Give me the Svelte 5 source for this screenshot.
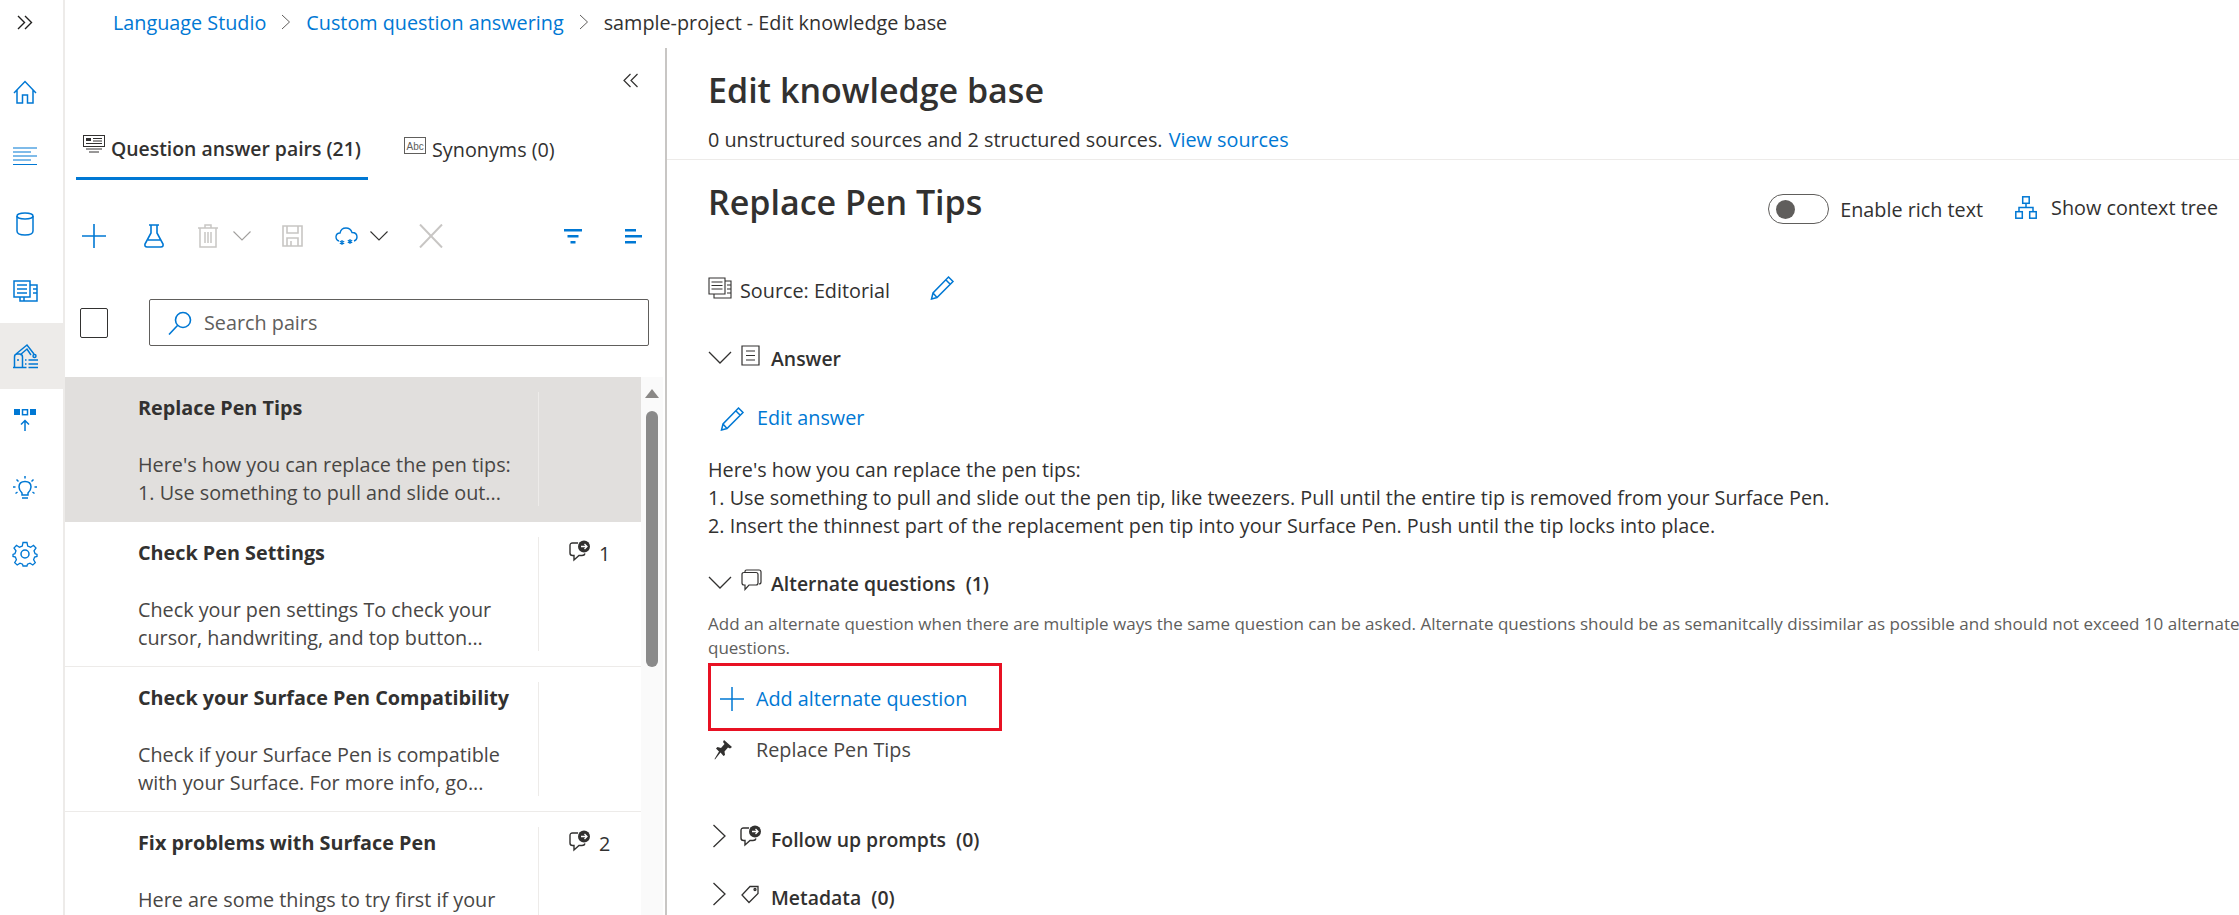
<script>
	const navIcons = ['home', 'lines', 'db', 'table', 'robot', 'deploy', 'bulb', 'gear'];
	const pairs = [
		{ title: 'Replace Pen Tips', body: ["Here's how you can replace the pen tips:", '1. Use something to pull and slide out...'], count: 0, selected: true },
		{ title: 'Check Pen Settings', body: ['Check your pen settings To check your', 'cursor, handwriting, and top button...'], count: 1 },
		{ title: 'Check your Surface Pen Compatibility', body: ['Check if your Surface Pen is compatible', 'with your Surface. For more info, go...'], count: 0 },
		{ title: 'Fix problems with Surface Pen', body: ['Here are some things to try first if your'], count: 2 }
	];
</script>

{#snippet followIcon()}
	<svg class="follow" width="22" height="22" viewBox="0 0 22 22" fill="none" stroke="currentColor" stroke-width="1.4">
		<path d="M9 3H3.5Q1 3 1 5.500V13Q1 15.500 3.500 15.500H5V20L10 15.500H13Q15.500 15.500 16 13.500" />
		<circle cx="15" cy="6.500" r="6" fill="currentColor" stroke="none" />
		<path d="M12 6.500H18M15.500 4L18 6.500L15.500 9" stroke="#fff" stroke-width="1.3" />
	</svg>
{/snippet}

{#snippet chevronDown(cls)}
	<svg class={cls} width="24" height="13" viewBox="0 0 24 13" fill="none" stroke="currentColor" stroke-width="1.3"><path d="M1 1L12 12L23 1" /></svg>
{/snippet}

{#snippet chevronRight()}
	<svg class="chev-r" width="14" height="24" viewBox="0 0 14 24" fill="none" stroke="currentColor" stroke-width="1.3"><path d="M1.500 1L13 12L1.500 23" /></svg>
{/snippet}

{#snippet pencil()}
	<svg width="25" height="25" viewBox="0 0 25 25" fill="none" stroke="#0078d4" stroke-width="1.500">
		<path d="M18.500 2L23 6.500L7 22.500L1.500 24L3 18ZM16 5L20.500 9.500M3 18L7 22.500" />
	</svg>
{/snippet}

<div class="app">
	<nav class="nav">
		<div class="expand">
			<svg width="16" height="15" viewBox="0 0 16 15" fill="none" stroke="#201f1e" stroke-width="1.400"><path d="M1 1L7.500 7.500L1 14M8 1L14.500 7.500L8 14" /></svg>
		</div>
		{#each navIcons as icon}
			<div class="nav-item" class:active={icon === 'robot'}>
				<svg width="26" height="26" viewBox="0 0 26 26" fill="none" stroke="#0078d4" stroke-width="1.500">
					{#if icon === 'home'}
						<path d="M2 14L13 2.500L24 14M5 11V24H10.500V16H15.500V24H21V11" />
					{:else if icon === 'lines'}
						<path stroke-width="1.200" d="M1 3H25M1 7H19M1 11H25M1 15H19M1 19.500H25" />
					{:else if icon === 'db'}
						<ellipse cx="13" cy="5" rx="8" ry="3" />
						<path d="M5 5V20Q5 24 13 24Q21 24 21 20V5" />
					{:else if icon === 'table'}
						<path d="M2 4H18V20H2ZM5 8H15M5 12H15M5 16H15" />
						<path d="M18 8H25V24H8V20M21 12H25M21 16H25M12 20V24" />
					{:else if icon === 'robot'}
						<path d="M1 24.500H13M2.500 24.500V14Q2.500 11 5 11H7.500Q10.500 11 10.500 14V24.500M4 11L15 2L22 11M8 12L15 6L19 12" />
						<circle cx="22.500" cy="13" r="1.500" />
						<circle cx="6" cy="17" r="1" fill="#0078d4" stroke="none" />
						<path d="M13 17H14.500M16.500 17H26M13 21H14.500M16.500 21H26M13 24.500H14.500M16.500 24.500H26" />
					{:else if icon === 'deploy'}
						<rect x="2" y="0" width="6" height="6" fill="#0078d4" stroke="none" />
						<rect x="10.500" y="0.700" width="5" height="5" />
						<rect x="18" y="0" width="6" height="6" fill="#0078d4" stroke="none" />
						<path d="M13 22V12M9 15.500L13 11.500L17 15.500" />
					{:else if icon === 'bulb'}
						<path d="M10 20V18Q7 15 7 12Q7 6.500 13 6.500Q19 6.500 19 12Q19 15 16 18V20ZM10 23H16" />
						<path d="M13 1V3.500M4.500 4.500L6.500 6.500M21.500 4.500L19.500 6.500M1 12H3.500M22.500 12H25M3.500 18.500L5.500 17M22.500 18.500L20.500 17" />
					{:else}
						<circle cx="13" cy="13" r="4" />
						<path d="M11 1.500H15L15.700 5L18.600 6.200L21.500 4.300L24 7L22 9.800L23.100 12.700L25 13.500V15.500L22.600 16L21.600 18.800L23.300 21.700L20.800 24L18 22.200L15.500 23.200L15 25H11L10.500 23.200L8 22.200L5.200 24L2.700 21.700L4.400 18.800L3.400 16L1 15.500V13.500L2.900 12.700L4 9.800L2 7L4.500 4.300L7.400 6.200L10.300 5Z" stroke-width="1.300" />
					{/if}
				</svg>
			</div>
		{/each}
	</nav>

	<div class="main">
		<header class="crumbs">
			<a href="#top">Language Studio</a>
			<svg width="10" height="16" viewBox="0 0 10 16" fill="none" stroke="#605e5c" stroke-width="1"><path d="M1 1L8.500 8L1 15" /></svg>
			<a href="#top">Custom question answering</a>
			<svg width="10" height="16" viewBox="0 0 10 16" fill="none" stroke="#605e5c" stroke-width="1"><path d="M1 1L8.500 8L1 15" /></svg>
			<span>sample-project - Edit knowledge base</span>
		</header>

		<div class="content">
			<aside class="left">
				<div class="collapse">
					<svg width="16" height="15" viewBox="0 0 16 15" fill="none" stroke="#323130" stroke-width="1.200"><path d="M7.500 1L1 7.500L7.500 14M14.500 1L8 7.500L14.500 14" /></svg>
				</div>

				<div class="tabs">
					<div class="tab on">
						<svg width="22" height="18" viewBox="0 0 22 18" fill="none" stroke="#323130" stroke-width="1">
							<rect x="0.500" y="0.500" width="21" height="11" />
							<rect x="3" y="3" width="5" height="3" fill="#323130" stroke="none" />
							<path d="M10 3.500H19M10 6H19M3 8.500H19M3 14H19M6 17H16" />
						</svg>
						<span>Question answer pairs (21)</span>
					</div>
					<div class="tab">
						<svg width="22" height="18" viewBox="0 0 22 18" fill="none" stroke="#605e5c" stroke-width="1">
							<rect x="0.500" y="0.500" width="21" height="16" />
							<text x="2.500" y="12.500" font-size="10" fill="#605e5c" stroke="none" font-family="Liberation Sans, sans-serif">Abc</text>
						</svg>
						<span>Synonyms (0)</span>
					</div>
				</div>

				<div class="toolbar">
					<svg class="t-add" width="24" height="24" viewBox="0 0 24 24" fill="none" stroke="#0078d4" stroke-width="1.600"><path d="M12 0V24M0 12H24" /></svg>
					<svg class="t-flask" width="20" height="24" viewBox="0 0 20 24" fill="none" stroke="#0078d4" stroke-width="1.600"><path d="M5 1H15M7 1V9L1 20Q0.500 23 3 23H17Q19.500 23 19 20L13 9V1M4 16H16" /></svg>
					<svg class="t-trash" width="20" height="24" viewBox="0 0 20 24" fill="none" stroke="#c8c6c4" stroke-width="1.500"><path d="M0 4H20M7 4V1H13V4M2 4V23H18V4M7 8V19M10 8V19M13 8V19" /></svg>
					<svg class="t-caret" width="18" height="10" viewBox="0 0 18 10" fill="none" stroke="#a19f9d" stroke-width="1.100"><path d="M0.500 0.500L9 9L17.500 0.500" /></svg>
					<svg class="t-save" width="21" height="22" viewBox="0 0 21 22" fill="none" stroke="#c8c6c4" stroke-width="1.600"><path d="M1 1H20V21H1ZM5 1V8H16V1M5 21V13H16V21M9 16V21" /></svg>
					<svg class="t-cloud" width="23" height="20" viewBox="0 0 23 20" fill="none" stroke="#0078d4" stroke-width="1.400">
						<path d="M4 15Q0.800 14 1 10.500Q1.500 7 5 7Q6 2 11 2Q15.500 2 17 6.500Q22 6.500 22 11Q22 14 19 15" />
						<path d="M7 14V19M4.800 15.200L9.200 17.800M9.200 15.200L4.800 17.800M15 13V18M12.800 14.200L17.200 16.800M17.200 14.200L12.800 16.800" stroke-width="1.200" />
					</svg>
					<svg class="t-caret2" width="18" height="10" viewBox="0 0 18 10" fill="none" stroke="#323130" stroke-width="1.100"><path d="M0.500 0.500L9 9L17.500 0.500" /></svg>
					<svg class="t-close" width="24" height="24" viewBox="0 0 24 24" fill="none" stroke="#c8c6c4" stroke-width="2"><path d="M1 0.500L23 23.500M23 0.500L1 23.500" /></svg>
					<svg class="t-filter" width="18" height="15" viewBox="0 0 18 15" fill="#0078d4"><rect width="18" height="2.500" /><rect x="3.500" y="6" width="11" height="2.500" /><rect x="6.500" y="12" width="5" height="2.500" /></svg>
					<svg class="t-sort" width="17" height="15" viewBox="0 0 17 15" fill="#0078d4"><rect width="11" height="2.500" /><rect y="6" width="17" height="2.500" /><rect y="12" width="11" height="2.500" /></svg>
				</div>

				<div class="search-row">
					<span class="check"></span>
					<div class="search">
						<svg width="24" height="24" viewBox="0 0 24 24" fill="none" stroke="#0078d4" stroke-width="1.600"><circle cx="15" cy="9" r="7.500" /><path d="M9.500 14.500L1 23.500" /></svg>
						<span>Search pairs</span>
					</div>
				</div>

				<div class="list-wrap">
					<ul class="list">
						{#each pairs as pair}
							<li class="pair" class:selected={pair.selected}>
								<div class="pair-text">
									<strong>{pair.title}</strong>
									<p>
										{#each pair.body as line}
											{line}<br />
										{/each}
									</p>
								</div>
								<div class="pair-count">
									{#if pair.count}
										{@render followIcon()}
										<span>{pair.count}</span>
									{/if}
								</div>
							</li>
						{/each}
					</ul>
					<div class="scrollbar">
						<span class="arrow"></span>
						<span class="thumb"></span>
					</div>
				</div>
			</aside>

			<section class="right">
				<div class="head">
					<h1>Edit knowledge base</h1>
					<p>0 unstructured sources and 2 structured sources. <a href="#top">View sources</a></p>
				</div>

				<div class="body">
					<div class="title-row">
						<h1>Replace Pen Tips</h1>
						<div class="controls">
							<span class="toggle"><i></i></span>
							<span class="rich">Enable rich text</span>
							<svg class="tree" width="22" height="23" viewBox="0 0 22 23" fill="none" stroke="#0078d4" stroke-width="1.500">
								<rect x="7.700" y="0.800" width="6.500" height="6.500" />
								<rect x="0.800" y="15.700" width="6.500" height="6.500" />
								<rect x="14.700" y="15.700" width="6.500" height="6.500" />
								<path d="M11 7.300V11.500M4 15.700V11.500H18V15.700" />
							</svg>
							<span class="ctx">Show context tree</span>
						</div>
					</div>

					<div class="source">
						<svg width="24" height="22" viewBox="0 0 24 22" fill="none" stroke="#323130" stroke-width="1.100">
							<path d="M1 1H17V17H1ZM3.500 5H14.500M3.500 8.500H14.500M3.500 12H14.500" />
							<path d="M17 4H23V21H6V17M19 8H23M19 12H23M19 16H23" />
						</svg>
						<span>Source: Editorial</span>
						<span class="source-edit">{@render pencil()}</span>
					</div>

					<div class="sec answer">
						{@render chevronDown('chev-d')}
						<svg class="sec-icon" width="19" height="21" viewBox="0 0 19 21" fill="none" stroke="#323130" stroke-width="1.200"><path d="M1 1H18V20H1ZM5 6H14M5 10.500H14M5 15H14" /></svg>
						<b>Answer</b>
					</div>

					<a class="action edit" href="#top">{@render pencil()}<span>Edit answer</span></a>

					<p class="answer-text">
						Here's how you can replace the pen tips:<br />
						1. Use something to pull and slide out the pen tip, like tweezers. Pull until the entire tip is removed from your Surface Pen.<br />
						2. Insert the thinnest part of the replacement pen tip into your Surface Pen. Push until the tip locks into place.
					</p>

					<div class="sec alt">
						{@render chevronDown('chev-d')}
						<svg class="sec-icon" width="21" height="22" viewBox="0 0 21 22" fill="none" stroke="#323130" stroke-width="1.200">
							<path d="M4 3V2.500Q4 1 5.500 1H18Q20 1 20 3V13Q20 15 18 15" />
							<path d="M3 3.500H15Q17 3.500 17 5.500V14Q17 16 15 16H8L4 20.500V16H3Q1 16 1 14V5.500Q1 3.500 3 3.500Z" />
						</svg>
						<b>Alternate questions &nbsp;(1)</b>
					</div>

					<p class="desc">
						Add an alternate question when there are multiple ways the same question can be asked. Alternate questions should be as semanitcally dissimilar as possible and should not exceed 10 alternate<br />
						questions.
					</p>

					<div class="highlight">
						<a class="action" href="#top">
							<svg width="24" height="24" viewBox="0 0 24 24" fill="none" stroke="#0078d4" stroke-width="1.500"><path d="M12 0V24M0 12H24" /></svg>
							<span>Add alternate question</span>
						</a>
					</div>

					<div class="alt-item">
						<svg width="18" height="20" viewBox="0 0 18 20" fill="#323130">
							<path d="M10 0L18 7L16 8.500L14 7.500L10.500 11.500L11 15L9.500 16L6.500 12.500L1 19.500L0.500 19L5 11.500L2 8.500L3.500 7L7 8L10.500 4L9 2Z" />
						</svg>
						<span>Replace Pen Tips</span>
					</div>

					<div class="sec follow-up">
						{@render chevronRight()}
						{@render followIcon()}
						<b>Follow up prompts &nbsp;(0)</b>
					</div>

					<div class="sec meta">
						{@render chevronRight()}
						<svg class="sec-icon" width="22" height="20" viewBox="0 0 22 20" fill="none" stroke="#323130" stroke-width="1.300">
							<path d="M10 2.500H18V9.500L9 18.500L2 11Z" />
							<circle cx="15" cy="5.500" r="1" />
						</svg>
						<b>Metadata &nbsp;(0)</b>
					</div>
				</div>
			</section>
		</div>
	</div>
</div>

<style>
	:global(body) {
		margin: 0;
		background: #fff;
		overflow: hidden;
	}

	.app {
		display: flex;
		height: 915px;
		overflow: hidden;
		font-family: "Open Sans", "Liberation Sans", sans-serif;
		font-size: 19.8px;
		color: #323130;
	}

	a {
		color: #0078d4;
		text-decoration: none;
	}

	svg {
		flex: none;
		display: block;
	}

	p,
	h1,
	ul {
		margin: 0;
		padding: 0;
	}

	/* left rail */
	.nav {
		width: 63px;
		flex: none;
		border-right: 2px solid #edebe9;
	}

	.expand {
		height: 59px;
		padding: 15px 0 0 17px;
		box-sizing: border-box;
	}

	.nav-item {
		height: 66px;
		display: flex;
		align-items: center;
		padding-left: 12px;
		box-sizing: border-box;
	}

	.nav-item.active {
		background: #edebe9;
	}

	.main {
		flex: 1;
		min-width: 0;
		display: flex;
		flex-direction: column;
	}

	.crumbs {
		height: 48px;
		flex: none;
		display: flex;
		align-items: center;
		gap: 15px;
		padding: 0 0 4px 48px;
		box-sizing: border-box;
	}

	.content {
		flex: 1;
		display: flex;
		min-height: 0;
	}

	/* question list panel */
	.left {
		width: 600px;
		flex: none;
		border-right: 2px solid #c8c6c4;
		overflow: hidden;
	}

	.collapse {
		height: 64px;
		display: flex;
		align-items: center;
		justify-content: flex-end;
		padding-right: 26px;
	}

	.tabs {
		height: 68px;
		display: flex;
		padding-left: 11px;
		box-sizing: border-box;
	}

	.tab {
		display: flex;
		align-items: center;
		gap: 6px;
		padding: 7px 7px 0;
		box-sizing: border-box;
		margin-right: 29px;
	}

	.tab svg {
		margin-top: -8px;
	}

	.tab.on {
		width: 292px;
		font-weight: 600;
		font-size: 19.4px;
		border-bottom: 3px solid #0078d4;
	}

	.toolbar {
		height: 112px;
		display: flex;
		align-items: center;
		padding-left: 17px;
	}

	.t-flask { margin-left: 38px; }
	.t-trash { margin-left: 34px; }
	.t-caret { margin-left: 15px; }
	.t-save { margin-left: 31px; }
	.t-cloud { margin-left: 32px; }
	.t-caret2 { margin-left: 12px; }
	.t-close { margin-left: 31px; }
	.t-filter { margin-left: 121px; }
	.t-sort { margin-left: 43px; }

	.search-row {
		display: flex;
		align-items: center;
		padding: 7px 0 0 15px;
	}

	.check {
		width: 26px;
		height: 28px;
		border: 1px solid #323130;
		border-radius: 2px;
	}

	.search {
		width: 480px;
		height: 45px;
		margin-left: 41px;
		border: 1px solid #605e5c;
		border-radius: 2px;
		display: flex;
		align-items: center;
		gap: 12px;
		padding-left: 18px;
		color: #605e5c;
	}

	.list-wrap {
		display: flex;
		margin-top: 31px;
	}

	.list {
		width: 576px;
		flex: none;
		list-style: none;
	}

	.pair {
		height: 145px;
		display: flex;
		padding: 15px 0 15px;
		box-sizing: border-box;
		border-bottom: 1px solid #edebe9;
	}

	.pair.selected {
		background: #e1dfdd;
		border-bottom-color: #e1dfdd;
	}

	.pair-text {
		width: 400px;
		padding-left: 73px;
		flex: none;
		border-right: 1px solid #edebe9;
	}

	.pair-text strong {
		display: block;
		font-weight: 700;
		font-size: 19.8px;
		line-height: 30px;
		padding-top: 1px;
	}

	.pair-text p {
		margin-top: 28px;
		line-height: 28px;
		white-space: nowrap;
		color: #484644;
	}

	.pair-count {
		display: flex;
		align-items: flex-start;
		gap: 8px;
		padding: 3px 0 0 30px;
	}

	.scrollbar {
		width: 22px;
		height: 540px;
		display: flex;
		flex-direction: column;
		align-items: center;
		background: #fafafa;
	}

	.arrow {
		margin-top: 12px;
		width: 0;
		height: 0;
		border-left: 7px solid transparent;
		border-right: 7px solid transparent;
		border-bottom: 9px solid #8a8886;
	}

	.thumb {
		margin-top: 13px;
		width: 12px;
		height: 256px;
		border-radius: 6px;
		background: #8a8a8a;
	}

	/* editor panel */
	.right {
		flex: 1;
		min-width: 0;
		overflow: hidden;
	}

	.head {
		height: 112px;
		box-sizing: border-box;
		padding: 22px 0 0 41px;
		border-bottom: 1px solid #edebe9;
	}

	h1 {
		font-size: 34px;
		line-height: 40px;
		font-weight: 600;
		color: #323130;
	}

	.head p {
		margin-top: 16px;
		line-height: 28px;
	}

	.head a {
		margin-left: 1px;
	}

	.body {
		padding: 22px 0 0 41px;
	}

	.title-row {
		display: flex;
		justify-content: space-between;
		padding-right: 21px;
	}

	.controls {
		display: flex;
		align-items: center;
		height: 54px;
	}

	.toggle {
		width: 61px;
		height: 30px;
		border: 1px solid #605e5c;
		border-radius: 15px;
		display: flex;
		align-items: center;
		padding-left: 7px;
		box-sizing: border-box;
	}

	.toggle i {
		width: 19px;
		height: 19px;
		border-radius: 50%;
		background: #605e5c;
	}

	.rich {
		margin-left: 11px;
	}

	.tree {
		margin: -4px 0 0 32px;
	}

	.ctx {
		margin: -4px 0 0 14px;
	}

	.source {
		display: flex;
		align-items: center;
		margin-top: 40px;
		height: 28px;
	}

	.source span:first-of-type {
		margin-left: 8px;
	}

	.source svg {
		margin-top: -5px;
	}

	.source-edit {
		margin-left: 40px;
	}

	.sec {
		display: flex;
		align-items: center;
		height: 28px;
		line-height: 28px;
	}

	.sec b {
		font-weight: 600;
		font-size: 19.4px;
		margin-left: 9px;
	}

	.chev-d {
		margin: -4px 9px 0 0;
		width: 24px;
	}

	.chev-r {
		margin: -8px 14px 0 4px;
	}

	.sec-icon,
	.sec :global(.follow) {
		margin-top: -8px;
	}

	.answer {
		margin-top: 41px;
	}

	.answer b {
		margin-left: 11px;
	}

	.action {
		display: flex;
		align-items: center;
		gap: 12px;
		line-height: 28px;
	}

	.edit {
		margin: 31px 0 0 12px;
	}

	.answer-text {
		margin-top: 24px;
		line-height: 28px;
		white-space: nowrap;
	}

	.alt {
		margin-top: 30px;
	}

	.desc {
		margin-top: 14px;
		font-size: 17px;
		line-height: 24px;
		color: #605e5c;
		white-space: nowrap;
	}

	.highlight {
		width: 294px;
		height: 68px;
		margin-top: 3px;
		box-sizing: border-box;
		border: 3px solid #e81123;
		display: flex;
		align-items: center;
		padding: 3px 0 0 9px;
	}

	.alt-item {
		display: flex;
		align-items: center;
		gap: 24px;
		margin: 5px 0 0 6px;
		line-height: 28px;
		color: #484644;
	}

	.follow-up {
		margin-top: 62px;
	}

	.meta {
		margin-top: 30px;
	}
</style>
